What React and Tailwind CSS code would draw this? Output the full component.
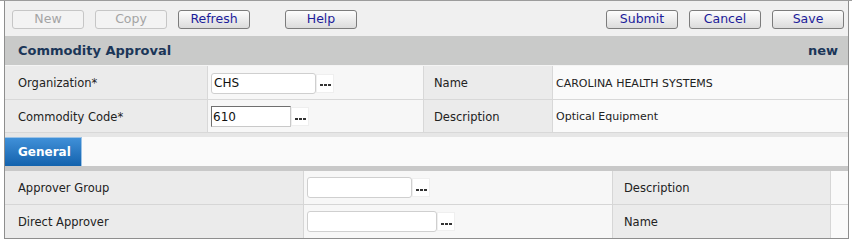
import React from "react";

function Btn({ label, disabled }) {
  return (
    <button
      className={
        "w-[72px] h-[19px] rounded-[3px] border text-[12.5px] leading-none flex items-center justify-center " +
        (disabled
          ? "border-[#c6c6c6] bg-[#f3f3f3] text-[#a4a4a4]"
          : "border-[#7c7c7c] bg-gradient-to-b from-[#fdfdfd] to-[#dcdcdc] text-[#1c1c9a]")
      }
    >
      {label}
    </button>
  );
}

function Dots() {
  return (
    <div className="h-[19px] w-[18px] bg-white border border-[#efefef] flex items-center justify-center pt-[4px] gap-px">
      <span className="w-[3px] h-[2px] bg-[#333]" />
      <span className="w-[3px] h-[2px] bg-[#333]" />
      <span className="w-[3px] h-[2px] bg-[#333]" />
    </div>
  );
}

function Input({ w, value, inset }) {
  return (
    <div
      className={
        "h-[21px] bg-white flex items-center text-[12px] text-[#111] " +
        (inset
          ? "border border-t-[#6f6f6f] border-l-[#6f6f6f] border-r-[#c9c9c9] border-b-[#c9c9c9] pl-[1px]"
          : "border border-[#cfcfcf] rounded-[3px] pl-[2px]")
      }
      style={{ width: w }}
    >
      {value}
    </div>
  );
}

export default function App() {
  return (
    <div className="w-[852px] h-[241px] bg-white font-['DejaVu_Sans',sans-serif] border-t border-[#9c9c9c]">
      <div className="ml-[4px] w-[845px] h-[238px] border-l border-r border-b border-[#8e8e8e] flex flex-col">
        {/* toolbar */}
        <div className="h-[35px] bg-[#f0f0f0] flex items-start pt-[9px] pl-[7px] pr-[4px]">
          <div className="flex gap-[11px]">
            <Btn label="New" disabled />
            <Btn label="Copy" disabled />
            <Btn label="Refresh" />
          </div>
          <div className="ml-[35px]">
            <Btn label="Help" />
          </div>
          <div className="ml-auto flex gap-[11px]">
            <Btn label="Submit" />
            <Btn label="Cancel" />
            <Btn label="Save" />
          </div>
        </div>
        {/* header */}
        <div className="h-[29px] bg-[#c9cac9] flex items-center justify-between pl-[13px] pr-[10px] text-[13px] font-bold text-[#1b3658]">
          <span>Commodity Approval</span>
          <span>new</span>
        </div>
        {/* top form */}
        <div className="border-t border-[#f4f4f4] grid grid-cols-[202px_215px_128px_1fr] grid-rows-[33px_32px] gap-px bg-[#d8d8d8] text-[11.5px] text-[#222]">
          <div className="bg-[#ebebeb] flex items-center pl-[13px] pt-[3px]">Organization*</div>
          <div className="bg-[#f7f7f7] flex items-center pl-[3px] pt-[1px]">
            <Input w={105} value="CHS" />
            <Dots />
          </div>
          <div className="bg-[#ebebeb] flex items-center pl-[10px] pt-[3px]">Name</div>
          <div className="bg-[#fafafa] flex items-center pl-[3px] pt-[3px] text-[11px]">CAROLINA HEALTH SYSTEMS</div>

          <div className="bg-[#ebebeb] flex items-center pl-[13px] pt-[3px]">Commodity Code*</div>
          <div className="bg-[#f7f7f7] flex items-center pl-[3px] pt-[1px]">
            <Input w={80} value="610" inset />
            <Dots />
          </div>
          <div className="bg-[#ebebeb] flex items-center pl-[10px] pt-[3px]">Description</div>
          <div className="bg-[#fafafa] flex items-center pl-[3px] pt-[3px] text-[11px]">Optical Equipment</div>
        </div>
        {/* tab strip */}
        <div className="h-[5px] bg-[#e6e6e6] border-t border-[#d8d8d8]" />
        <div className="h-[29px] bg-[#fafafa] flex">
          <div className="w-[77px] bg-gradient-to-b from-[#3f90d8] to-[#1262ad] border-t border-r border-[#9cc3e6] text-white font-bold text-[12px] flex items-center pl-[13px]">
            General
          </div>
        </div>
        <div className="h-[5px] bg-[#c8c8c8]" />
        {/* lower form */}
        <div className="grid grid-cols-[298px_308px_217px_1fr] grid-rows-[33px_33px] gap-px bg-[#d6d6d6] text-[11.5px] text-[#222]">
          <div className="bg-[#ebebeb] flex items-center pl-[13px] pt-[2px]">Approver Group</div>
          <div className="bg-[#f7f7f7] flex items-center pl-[3px]">
            <Input w={105} value="" />
            <Dots />
          </div>
          <div className="bg-[#ebebeb] flex items-center pl-[11px] pt-[2px]">Description</div>
          <div className="bg-[#fafafa]" />

          <div className="bg-[#ebebeb] flex items-center pl-[13px] pt-[2px]">Direct Approver</div>
          <div className="bg-[#f7f7f7] flex items-center pl-[3px]">
            <Input w={130} value="" />
            <Dots />
          </div>
          <div className="bg-[#ebebeb] flex items-center pl-[11px] pt-[2px]">Name</div>
          <div className="bg-[#fafafa]" />
        </div>
      </div>
    </div>
  );
}
